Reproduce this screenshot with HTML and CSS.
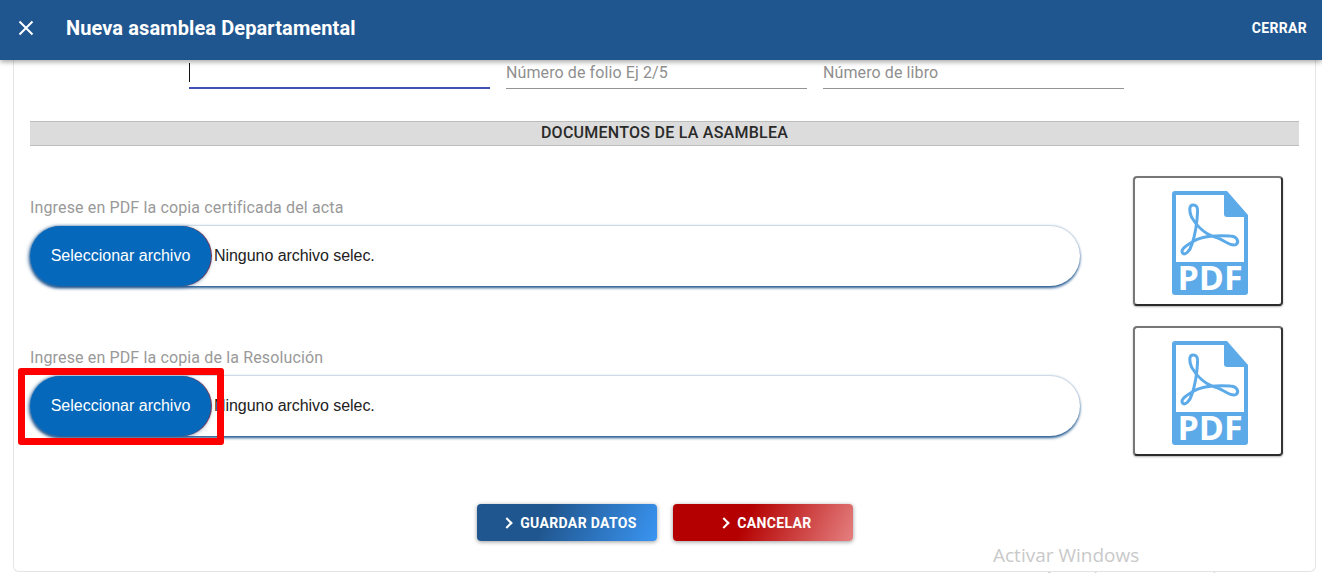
FILE: index.html
```html
<!DOCTYPE html>
<html lang="es">
<head>
  <meta charset="UTF-8" />
  <meta name="viewport" content="width=device-width, initial-scale=1.0" />
  <title>Nueva asamblea Departamental</title>
  <link rel="stylesheet" href="styles.css">
</head>
<body>
  <header class="toolbar">
    <svg class="cerrar-icon" viewBox="0 0 16 16" width="16" height="16">
      <path d="M1.5 1.5 L14.5 14.5 M14.5 1.5 L1.5 14.5" stroke="#fff" stroke-width="2" fill="none" />
    </svg>
    <h1>Nueva asamblea Departamental</h1>
    <span class="cerrar">CERRAR</span>
  </header>

  <main class="card">
    <div class="campos">
      <div class="campo activo"><span class="cursor"></span></div>
      <div class="campo">Número de folio Ej 2/5</div>
      <div class="campo">Número de libro</div>
    </div>

    <h2 class="seccion">DOCUMENTOS DE LA ASAMBLEA</h2>

    <div class="documento">
      <div class="documento-datos">
        <label>Ingrese en PDF la copia certificada del acta</label>
        <div class="archivo">
          <button class="archivo-btn">Seleccionar archivo</button>
          <span class="archivo-nombre">Ninguno archivo selec.</span>
        </div>
      </div>
      <div class="pdf-box">
        <svg viewBox="0 0 76 110" width="76" height="110">
          <path d="M3 0 H55 L76 24 V101 Q76 104 73 104 H3 Q0 104 0 101 V3 Q0 0 3 0 Z" fill="#5daae9" />
          <path d="M4 4 H52 V23 Q52 26 55 26 H72 V71 H4 Z" fill="#fff" />
          <path d="M21 14 C17 14 17 20 19.5 26 C24 34 33 44 46 47 C52 49.5 60 56 64 53.5 C67.5 51 65 45 58 45 C46 44 30 45 22 50 C15 54 8 58.5 10.5 62 C13 65 18 60 20 53 C23 44 25 32 25.5 22 C26 17 25 14 21 14 Z" fill="none" stroke="#5daae9" stroke-width="3" />
          <text x="38" y="99" text-anchor="middle" class="pdf-text">PDF</text>
        </svg>
      </div>
    </div>

    <div class="documento">
      <div class="documento-datos">
        <label>Ingrese en PDF la copia de la Resolución</label>
        <div class="archivo">
          <button class="archivo-btn">Seleccionar archivo</button>
          <span class="archivo-nombre">Ninguno archivo selec.</span>
          <div class="resaltado"></div>
        </div>
      </div>
      <div class="pdf-box">
        <svg viewBox="0 0 76 110" width="76" height="110">
          <path d="M3 0 H55 L76 24 V101 Q76 104 73 104 H3 Q0 104 0 101 V3 Q0 0 3 0 Z" fill="#5daae9" />
          <path d="M4 4 H52 V23 Q52 26 55 26 H72 V71 H4 Z" fill="#fff" />
          <path d="M21 14 C17 14 17 20 19.5 26 C24 34 33 44 46 47 C52 49.5 60 56 64 53.5 C67.5 51 65 45 58 45 C46 44 30 45 22 50 C15 54 8 58.5 10.5 62 C13 65 18 60 20 53 C23 44 25 32 25.5 22 C26 17 25 14 21 14 Z" fill="none" stroke="#5daae9" stroke-width="3" />
          <text x="38" y="99" text-anchor="middle" class="pdf-text">PDF</text>
        </svg>
      </div>
    </div>

    <div class="acciones">
      <button class="accion guardar"><i class="chevron"></i>GUARDAR DATOS</button>
      <button class="accion cancelar"><i class="chevron"></i>CANCELAR</button>
    </div>
  </main>

  <div class="marca-agua">
    <p>Activar Windows</p>
    <small>Ve a Configuración para activar Windows.</small>
  </div>
</body>
</html>
```

FILE: styles.css
```css
* {
  box-sizing: border-box;
  margin: 0;
  padding: 0;
}

html, body {
  height: 573px;
  overflow: hidden;
}

body {
  background: #fff;
  font-family: Roboto, sans-serif;
  color: #333;
}

.toolbar {
  position: relative;
  z-index: 2;
  display: flex;
  align-items: center;
  height: 60px;
  padding: 0 15px 4px 18px;
  background: #20568f;
  color: #fff;
  box-shadow: 0 2px 5px rgba(0, 0, 0, 0.35);
}

.toolbar h1 {
  flex: 1;
  margin-left: 32px;
  font-size: 20px;
  font-weight: 700;
  letter-spacing: 0.1px;
}

.cerrar {
  font-size: 14px;
  font-weight: 700;
  letter-spacing: 0.3px;
}

.card {
  height: 512px;
  margin: 0 6px 0 13px;
  padding: 0 16px;
  border: 1px solid #e4e4e4;
  border-top: 0;
  border-radius: 0 0 6px 6px;
}

.campos {
  display: flex;
  gap: 16px;
  height: 61px;
  padding-left: 159px;
}

.campo {
  display: flex;
  align-items: center;
  width: 301px;
  height: 29px;
  padding-bottom: 4px;
  border-bottom: 1px solid #949494;
  font-size: 16px;
  letter-spacing: 0.1px;
  color: #8f8f8f;
}

.campo.activo {
  border-bottom: 2px solid #3f51b5;
  padding-bottom: 3px;
}

.cursor {
  width: 1px;
  height: 19px;
  background: #111;
}

.seccion {
  height: 25px;
  border-top: 1px solid #bdbdbd;
  border-bottom: 1px solid #bdbdbd;
  background: #dcdcdc;
  font-size: 16px;
  font-weight: 500;
  line-height: 21px;
  text-align: center;
  letter-spacing: 0.25px;
  color: #2a2a2a;
}

.documento {
  display: flex;
  justify-content: space-between;
  height: 130px;
  margin-top: 30px;
  padding-right: 16px;
}

.documento + .documento {
  margin-top: 20px;
}

.documento-datos {
  width: 1050px;
  padding-top: 22px;
}

.documento-datos label {
  display: block;
  height: 28px;
  font-size: 16px;
  line-height: 20px;
  letter-spacing: 0.14px;
  color: #999;
}

.archivo {
  position: relative;
  display: flex;
  align-items: center;
  height: 60px;
  border-radius: 30px;
  background: #fff;
  box-shadow: 0 2px 3px rgba(32, 86, 143, 1), 0 -1px 2px rgba(32, 86, 143, 0.25);
}

.archivo-btn {
  width: 181px;
  height: 60px;
  border: 0;
  border-radius: 30px;
  background: #0568bb;
  color: #fff;
  font-family: "Liberation Sans", Arial, sans-serif;
  font-size: 16px;
  box-shadow: 1px 0 0 #7b3b55, -1px 1px 4px rgba(32, 86, 143, 0.8);
}

.archivo-nombre {
  margin-left: 3px;
  font-family: "Liberation Sans", Arial, sans-serif;
  font-size: 16px;
  letter-spacing: -0.05px;
  color: #222;
}

.resaltado {
  position: absolute;
  left: -12px;
  top: -8px;
  width: 206px;
  height: 77px;
  border: 7px solid #fe0000;
  border-radius: 3px;
}

.pdf-box {
  display: flex;
  justify-content: center;
  align-items: flex-start;
  width: 150px;
  height: 130px;
  padding: 13px 0 0 4px;
  border: 2px solid;
  border-color: #777 #333 #2b2b2b #777;
  border-radius: 4px;
  background: #fff;
  box-shadow: 0 1px 2px rgba(0, 0, 0, 0.3);
}

.pdf-text {
  font-family: "Open Sans", sans-serif;
  font-size: 34px;
  font-weight: 700;
  fill: #fff;
}

.acciones {
  display: flex;
  justify-content: center;
  gap: 16px;
  margin-top: 48px;
}

.accion {
  display: flex;
  justify-content: center;
  align-items: center;
  gap: 9px;
  width: 180px;
  height: 37px;
  padding-left: 7px;
  border: 0;
  border-radius: 4px;
  color: #fff;
  font-family: Roboto, sans-serif;
  font-size: 14px;
  font-weight: 700;
  letter-spacing: 0.35px;
  box-shadow: 0 1px 4px rgba(0, 0, 0, 0.4);
}

.guardar {
  background: linear-gradient(115deg, #20568f 0%, #20568f 38%, #3a95f2 100%);
}

.cancelar {
  background: linear-gradient(115deg, #b40000 0%, #b40000 40%, #e58080 100%);
}

.chevron {
  width: 8px;
  height: 8px;
  border-top: 2px solid #fff;
  border-right: 2px solid #fff;
  transform: rotate(45deg);
}

.marca-agua {
  position: absolute;
  left: 993px;
  top: 542px;
  width: 329px;
  font-family: "Open Sans", sans-serif;
  color: #c9c9c9;
  white-space: nowrap;
  overflow: hidden;
}

.marca-agua p {
  font-size: 19px;
  line-height: 26px;
}

.marca-agua small {
  display: block;
  font-size: 13px;
  line-height: 18px;
  color: #c9c9c9;
}
```
